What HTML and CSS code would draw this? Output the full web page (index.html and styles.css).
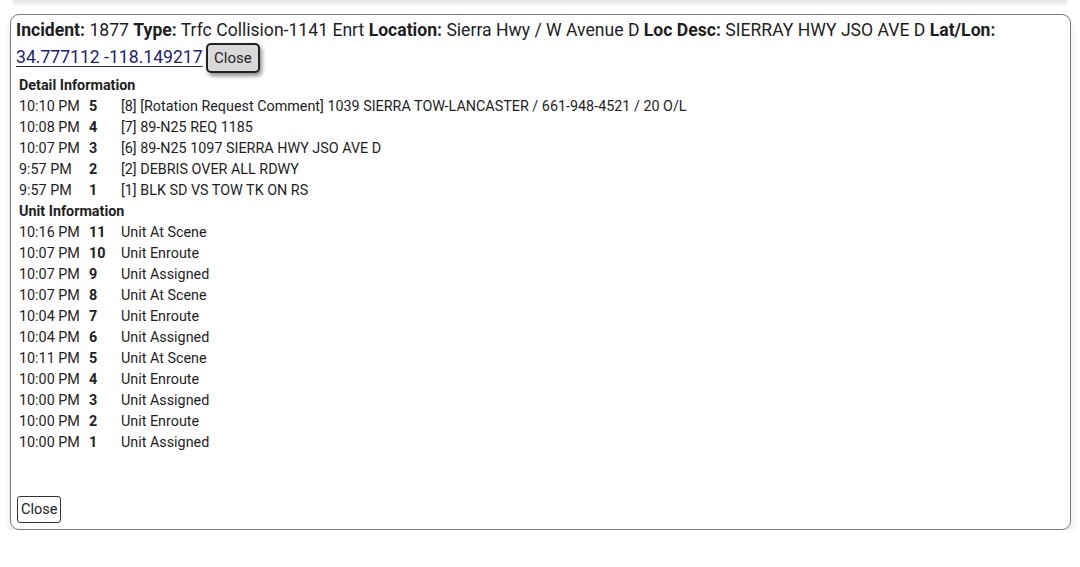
FILE: index.html
```html
<!DOCTYPE html>
<html>
<head>
<meta charset="utf-8">
<link rel="stylesheet" href="styles.css">
</head>
<body>
<div class="prev"></div>
<div class="card">
  <div class="head">
    <b>Incident:</b> 1877 <b>Type:</b> Trfc Collision-1141 Enrt <b>Location:</b> Sierra Hwy / W Avenue D <b>Loc Desc:</b> SIERRAY HWY JSO AVE D <b>Lat/Lon:</b><br>
    <a class="link" href="#">34.777112 -118.149217</a> <button class="btn-top">Close</button>
  </div>
  <div class="section">
    <div class="title">Detail Information</div>
    <div class="row"><span class="t">10:10 PM</span><span class="n">5</span><span class="d">[8] [Rotation Request Comment] 1039 SIERRA TOW-LANCASTER / 661-948-4521 / 20 O/L</span></div>
    <div class="row"><span class="t">10:08 PM</span><span class="n">4</span><span class="d">[7] 89-N25 REQ 1185</span></div>
    <div class="row"><span class="t">10:07 PM</span><span class="n">3</span><span class="d">[6] 89-N25 1097 SIERRA HWY JSO AVE D</span></div>
    <div class="row"><span class="t">9:57 PM</span><span class="n">2</span><span class="d">[2] DEBRIS OVER ALL RDWY</span></div>
    <div class="row"><span class="t">9:57 PM</span><span class="n">1</span><span class="d">[1] BLK SD VS TOW TK ON RS</span></div>
    <div class="title">Unit Information</div>
    <div class="row"><span class="t">10:16 PM</span><span class="n">11</span><span class="d">Unit At Scene</span></div>
    <div class="row"><span class="t">10:07 PM</span><span class="n">10</span><span class="d">Unit Enroute</span></div>
    <div class="row"><span class="t">10:07 PM</span><span class="n">9</span><span class="d">Unit Assigned</span></div>
    <div class="row"><span class="t">10:07 PM</span><span class="n">8</span><span class="d">Unit At Scene</span></div>
    <div class="row"><span class="t">10:04 PM</span><span class="n">7</span><span class="d">Unit Enroute</span></div>
    <div class="row"><span class="t">10:04 PM</span><span class="n">6</span><span class="d">Unit Assigned</span></div>
    <div class="row"><span class="t">10:11 PM</span><span class="n">5</span><span class="d">Unit At Scene</span></div>
    <div class="row"><span class="t">10:00 PM</span><span class="n">4</span><span class="d">Unit Enroute</span></div>
    <div class="row"><span class="t">10:00 PM</span><span class="n">3</span><span class="d">Unit Assigned</span></div>
    <div class="row"><span class="t">10:00 PM</span><span class="n">2</span><span class="d">Unit Enroute</span></div>
    <div class="row"><span class="t">10:00 PM</span><span class="n">1</span><span class="d">Unit Assigned</span></div>
  </div>
  <div class="foot"><button class="btn-bottom">Close</button></div>
</div>
</body>
</html>
```
FILE: styles.css
```css
html, body {
  margin: 0;
  padding: 0;
  background: #fff;
  font-family: Roboto, "Liberation Sans", sans-serif;
  color: #1e1e1e;
}
.prev {
  height: 6px;
  margin: 0 12px 0 12px;
  background: linear-gradient(#e4e4e4, #efefef 60%, #fafafa);
  border-radius: 0 0 6px 6px;
}
.card {
  margin: 8px 9px 0 10px;
  border: 1.5px solid #7a7a7a;
  border-radius: 9px;
  box-shadow: 0 6px 8px rgba(0,0,0,0.12);
  padding: 3px 6px 6px 5px;
  height: 516px;
  box-sizing: border-box;
  display: flex;
  flex-direction: column;
}
.head {
  font-size: 17.6px;
  line-height: 25px;
}
.head b { font-weight: 700; }
.link {
  color: #23236e;
  text-decoration: underline;
  text-decoration-thickness: 1px;
  text-underline-offset: 3px;
}
.btn-top {
  font-family: Roboto, "Liberation Sans", sans-serif;
  font-size: 15px;
  line-height: 18px;
  color: #222;
  background: #d9d9d9;
  border: 2px solid #222;
  border-radius: 5px;
  padding: 4px 6px;
  margin-left: -1px;
  box-shadow: 2px 3px 4px rgba(0,0,0,0.45);
  vertical-align: 0;
}
.section {
  padding: 2px 0 0 3px;
  font-size: 14.35px;
  line-height: 21px;
}
.title { font-weight: 700; }
.row { display: flex; }
.t { width: 70px; }
.n { width: 32px; font-weight: 700; }
.foot {
  margin-top: auto;
  padding-left: 1px;
}
.btn-bottom {
  font-family: Roboto, "Liberation Sans", sans-serif;
  font-size: 14.5px;
  color: #222;
  background: #fff;
  border: 1px solid #333;
  border-radius: 3px;
  padding: 4px 3px;
}
```
